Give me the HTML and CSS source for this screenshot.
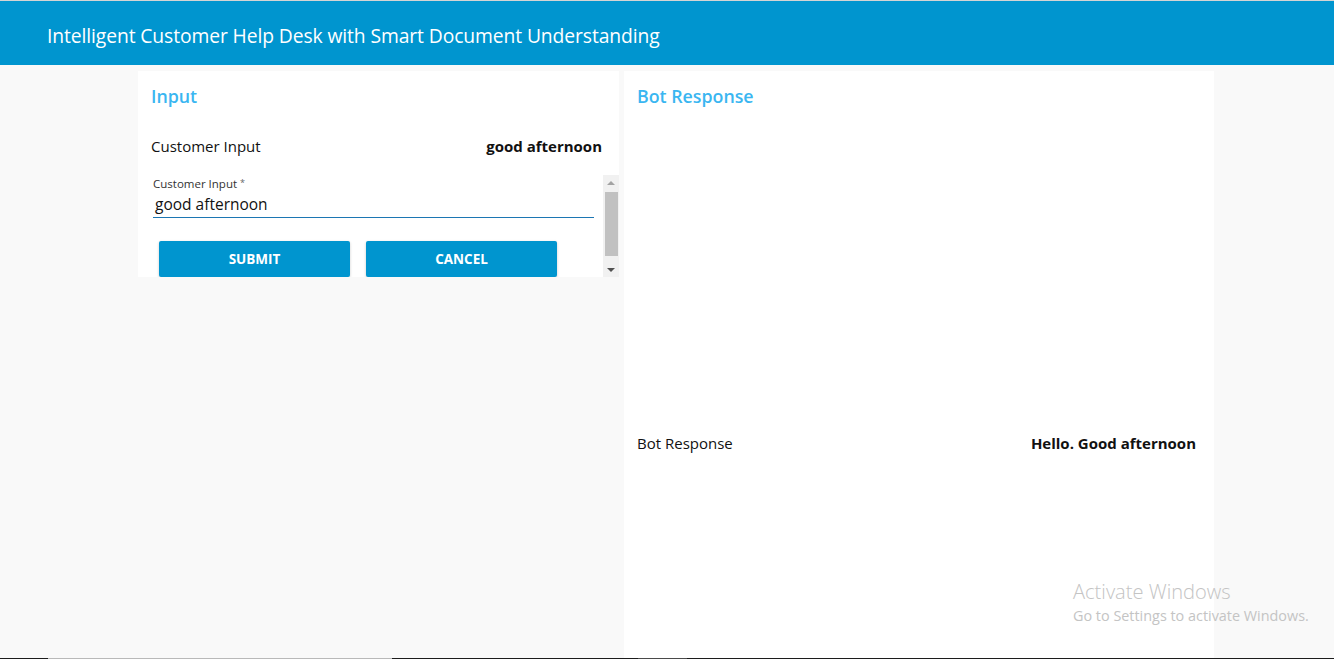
FILE: index.html
```html
<!DOCTYPE html>
<html lang="en">
<head>
<meta charset="utf-8">
<title>Intelligent Customer Help Desk</title>
<link rel="stylesheet" href="styles.css">
</head>
<body>
<div class="page">
  <header class="app-header">
    <h1 class="app-title">Intelligent Customer Help Desk with Smart Document Understanding</h1>
  </header>
  <main class="content">
    <section class="card card-input">
      <h2 class="card-title">Input</h2>
      <div class="kv-row">
        <span class="kv-label">Customer Input</span>
        <span class="kv-value">good afternoon</span>
      </div>
      <div class="scroll-box">
        <div class="scroll-content">
          <div class="field">
            <label class="field-label">Customer Input <span class="req">*</span></label>
            <div class="field-value">good afternoon</div>
          </div>
          <div class="actions">
            <button class="btn">SUBMIT</button>
            <button class="btn">CANCEL</button>
          </div>
        </div>
        <div class="scrollbar">
          <span class="arrow arrow-up"></span>
          <span class="thumb"></span>
          <span class="arrow arrow-down"></span>
        </div>
      </div>
    </section>
    <section class="card card-output">
      <h2 class="card-title">Bot Response</h2>
      <div class="kv-row kv-bot">
        <span class="kv-label">Bot Response</span>
        <span class="kv-value">Hello. Good afternoon</span>
      </div>
    </section>
  </main>
  <div class="taskbar-edge">
    <span class="seg seg-dark" style="width:48px"></span>
    <span class="seg seg-light" style="width:344px"></span>
    <span class="seg seg-dark" style="width:246px"></span>
    <span class="seg seg-mid" style="width:49px"></span>
    <span class="seg seg-dark seg-fill"></span>
  </div>
  <div class="watermark">
    <div class="wm-title">Activate Windows</div>
    <div class="wm-sub">Go to Settings to activate Windows.</div>
  </div>
</div>
</body>
</html>
```

FILE: styles.css
```css
* { box-sizing: border-box; }

html, body {
  margin: 0;
  padding: 0;
  height: 659px;
  overflow: hidden;
}

body {
  background: #f9f9f9;
  font-family: "Open Sans", "Noto Sans", "Liberation Sans", sans-serif;
  color: #111;
}

.page {
  position: relative;
  height: 659px;
  display: flex;
  flex-direction: column;
}

.app-header {
  flex: 0 0 65px;
  border-top: 1px solid #d4d4d4;
  background: #0095cf;
  display: flex;
  align-items: center;
  padding-left: 47px;
  padding-top: 4px;
}

.app-title {
  margin: 0;
  color: #fff;
  font-weight: 400;
  font-size: 19.3px;
  letter-spacing: -0.1px;
}

.content {
  flex: 1;
  display: flex;
  align-items: flex-start;
  gap: 5px;
  padding: 6px 0 0 138px;
  min-height: 0;
}

.card {
  background: #fff;
}

.card-input {
  width: 481px;
  height: 206px;
  padding: 13px 0 0 13px;
  display: flex;
  flex-direction: column;
  overflow: hidden;
}

.card-output {
  width: 590px;
  height: 100%;
  padding: 13px 18px 0 13px;
}

.card-title {
  margin: 0;
  font-size: 17.8px;
  line-height: 24px;
  font-weight: 600;
  color: #3ab6f1;
}

.kv-row {
  display: flex;
  justify-content: space-between;
  align-items: center;
  height: 20px;
  margin-top: 28px;
  font-size: 15px;
}

.card-input .kv-row {
  margin-right: 17px;
}

.kv-bot {
  margin-top: 325px;
}

.kv-label { font-weight: 400; }
.kv-value { font-weight: 700; }

.scroll-box {
  margin-top: 19px;
  height: 102px;
  display: flex;
  margin-left: -6px;
}

.scroll-content {
  flex: 1;
  padding: 1px 9px 0 8px;
  overflow: hidden;
}

.field-label {
  display: block;
  font-size: 11.5px;
  line-height: 14px;
  color: #333;
}

.req {
  font-size: 9px;
  vertical-align: 2px;
  color: #666;
}

.field-value {
  font-size: 15.5px;
  line-height: 22px;
  padding: 2px 0 2px 2px;
  border-bottom: 1px solid #1c76b3;
}

.actions {
  display: flex;
  gap: 16px;
  padding-left: 6px;
  margin-top: 23px;
}

.btn {
  width: 191px;
  height: 36px;
  border: 0;
  border-radius: 2px;
  background: #0095cf;
  color: #fff;
  font-family: inherit;
  font-weight: 700;
  font-size: 13.5px;
  box-shadow: 0 1px 3px rgba(0, 0, 0, 0.2);
}

.scrollbar {
  flex: 0 0 16px;
  background: #f1f1f1;
  display: flex;
  flex-direction: column;
  align-items: center;
  padding: 6px 0 5px;
}

.arrow {
  width: 0;
  height: 0;
  border-left: 4px solid transparent;
  border-right: 4px solid transparent;
}

.arrow-up { border-bottom: 4px solid #a3a3a3; }
.arrow-down { border-top: 4px solid #505050; margin-top: auto; }

.thumb {
  width: 13px;
  height: 64px;
  margin-top: 7px;
  background: #c1c1c1;
}

.taskbar-edge {
  flex: 0 0 1px;
  display: flex;
}

.seg { height: 1px; display: block; }
.seg-dark { background: #1c1c1c; }
.seg-light { background: #b9b9b9; }
.seg-mid { background: #4a4a4a; }
.seg-fill { flex: 1; }

.watermark {
  position: absolute;
  left: 1073px;
  top: 580px;
  color: #c4c4c4;
  font-family: "Open Sans", "Noto Sans", sans-serif;
}

.wm-title {
  font-size: 20.1px;
  line-height: 24px;
  font-weight: 300;
}

.wm-sub {
  font-size: 14.4px;
  line-height: 24px;
}
```
